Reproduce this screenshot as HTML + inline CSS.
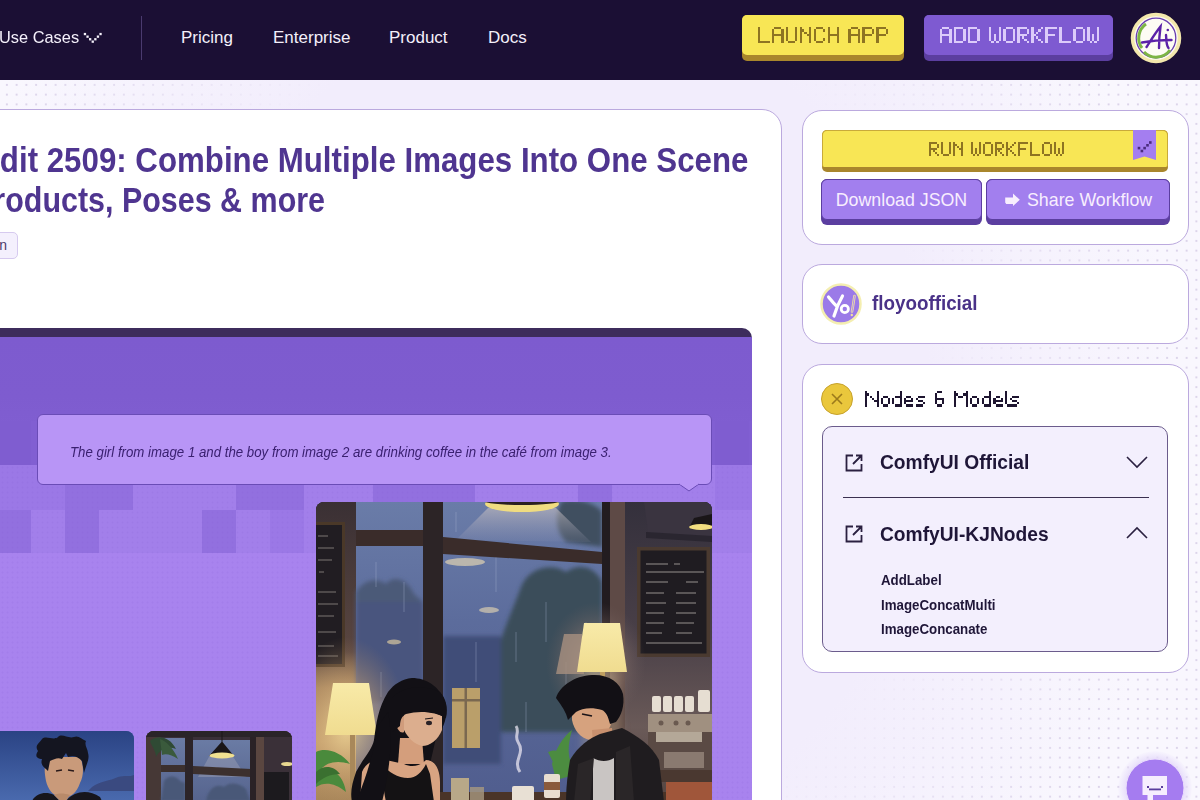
<!DOCTYPE html>
<html><head><meta charset="utf-8">
<style>
*{margin:0;padding:0;box-sizing:border-box}
html,body{width:1200px;height:800px;overflow:hidden}
body{position:relative;font-family:"Liberation Sans",sans-serif;background:#f9f7fe}
.abs{position:absolute}
#bgdots{position:absolute;left:0;top:80px;width:1200px;height:720px;background-color:#f9f7fe;
 background-image:radial-gradient(circle,#dcd4ea 0.9px,transparent 1.4px);background-size:9.75px 9.75px;background-position:2px 0px}
#bgfade{position:absolute;left:0;top:80px;width:1200px;height:720px;background:radial-gradient(ellipse 620px 700px at 560px 340px,#f2edfc 0%,#f2edfc 60%,rgba(242,237,252,0) 100%)}
nav{position:absolute;left:0;top:0;width:1200px;height:80px;background:#1b0f34}
.nv{position:absolute;color:#f4f0fa;font-size:17px;top:28px}
.pix{font-family:"Liberation Mono",monospace}
.card{position:absolute;background:#fff;border:1px solid #bba9de;border-radius:20px}
</style></head><body>
<div id="bgdots"></div>
<div id="bgfade"></div>
<nav>
 <div class="nv" style="left:-1px;transform:scaleX(0.963);transform-origin:0 0">Use Cases</div>
 <svg class="abs" style="left:0;top:0;overflow:visible" width="1" height="1"><g fill="#f4f0fa"><rect x="83.8" y="32.9" width="2.3" height="2.3"/><rect x="86.4" y="35.5" width="2.3" height="2.3"/><rect x="89.0" y="38.1" width="2.3" height="2.3"/><rect x="91.6" y="40.5" width="2.3" height="2.3"/><rect x="94.2" y="38.1" width="2.3" height="2.3"/><rect x="96.8" y="35.5" width="2.3" height="2.3"/><rect x="99.4" y="32.9" width="2.3" height="2.3"/></g></svg>
 <div class="abs" style="left:141px;top:16px;width:1px;height:44px;background:#4a3a6e"></div>
 <div class="nv" style="left:181px">Pricing</div>
 <div class="nv" style="left:273px">Enterprise</div>
 <div class="nv" style="left:389px">Product</div>
 <div class="nv" style="left:488px">Docs</div>
 <div class="abs" style="left:742px;top:15px;width:162px;height:46px;background:#a9862c;border-radius:5px"></div>
 <div class="abs pix" style="left:742px;top:15px;width:162px;height:40px;background:#f8e655;border-radius:5px;"></div>
 <svg class="abs" style="left:757.50px;top:26.80px" width="135" height="18" viewBox="0 0 135 18"><g fill="#8e7422" shape-rendering="crispEdges"><rect x="0.00" y="0.00" width="2.32" height="2.28"/><rect x="0.00" y="2.28" width="2.32" height="2.28"/><rect x="0.00" y="4.56" width="2.32" height="2.28"/><rect x="0.00" y="6.84" width="2.32" height="2.28"/><rect x="0.00" y="9.12" width="2.32" height="2.28"/><rect x="0.00" y="11.40" width="2.32" height="2.28"/><rect x="0.00" y="13.68" width="11.60" height="2.28"/><rect x="16.24" y="0.00" width="6.96" height="2.28"/><rect x="13.92" y="2.28" width="2.32" height="2.28"/><rect x="23.20" y="2.28" width="2.32" height="2.28"/><rect x="13.92" y="4.56" width="2.32" height="2.28"/><rect x="23.20" y="4.56" width="2.32" height="2.28"/><rect x="13.92" y="6.84" width="11.60" height="2.28"/><rect x="13.92" y="9.12" width="2.32" height="2.28"/><rect x="23.20" y="9.12" width="2.32" height="2.28"/><rect x="13.92" y="11.40" width="2.32" height="2.28"/><rect x="23.20" y="11.40" width="2.32" height="2.28"/><rect x="13.92" y="13.68" width="2.32" height="2.28"/><rect x="23.20" y="13.68" width="2.32" height="2.28"/><rect x="27.84" y="0.00" width="2.32" height="2.28"/><rect x="37.12" y="0.00" width="2.32" height="2.28"/><rect x="27.84" y="2.28" width="2.32" height="2.28"/><rect x="37.12" y="2.28" width="2.32" height="2.28"/><rect x="27.84" y="4.56" width="2.32" height="2.28"/><rect x="37.12" y="4.56" width="2.32" height="2.28"/><rect x="27.84" y="6.84" width="2.32" height="2.28"/><rect x="37.12" y="6.84" width="2.32" height="2.28"/><rect x="27.84" y="9.12" width="2.32" height="2.28"/><rect x="37.12" y="9.12" width="2.32" height="2.28"/><rect x="27.84" y="11.40" width="2.32" height="2.28"/><rect x="37.12" y="11.40" width="2.32" height="2.28"/><rect x="30.16" y="13.68" width="6.96" height="2.28"/><rect x="41.76" y="0.00" width="2.32" height="2.28"/><rect x="51.04" y="0.00" width="2.32" height="2.28"/><rect x="41.76" y="2.28" width="4.64" height="2.28"/><rect x="51.04" y="2.28" width="2.32" height="2.28"/><rect x="41.76" y="4.56" width="2.32" height="2.28"/><rect x="46.40" y="4.56" width="2.32" height="2.28"/><rect x="51.04" y="4.56" width="2.32" height="2.28"/><rect x="41.76" y="6.84" width="2.32" height="2.28"/><rect x="48.72" y="6.84" width="4.64" height="2.28"/><rect x="41.76" y="9.12" width="2.32" height="2.28"/><rect x="51.04" y="9.12" width="2.32" height="2.28"/><rect x="41.76" y="11.40" width="2.32" height="2.28"/><rect x="51.04" y="11.40" width="2.32" height="2.28"/><rect x="41.76" y="13.68" width="2.32" height="2.28"/><rect x="51.04" y="13.68" width="2.32" height="2.28"/><rect x="58.00" y="0.00" width="6.96" height="2.28"/><rect x="55.68" y="2.28" width="2.32" height="2.28"/><rect x="64.96" y="2.28" width="2.32" height="2.28"/><rect x="55.68" y="4.56" width="2.32" height="2.28"/><rect x="55.68" y="6.84" width="2.32" height="2.28"/><rect x="55.68" y="9.12" width="2.32" height="2.28"/><rect x="55.68" y="11.40" width="2.32" height="2.28"/><rect x="64.96" y="11.40" width="2.32" height="2.28"/><rect x="58.00" y="13.68" width="6.96" height="2.28"/><rect x="69.60" y="0.00" width="2.32" height="2.28"/><rect x="78.88" y="0.00" width="2.32" height="2.28"/><rect x="69.60" y="2.28" width="2.32" height="2.28"/><rect x="78.88" y="2.28" width="2.32" height="2.28"/><rect x="69.60" y="4.56" width="2.32" height="2.28"/><rect x="78.88" y="4.56" width="2.32" height="2.28"/><rect x="69.60" y="6.84" width="11.60" height="2.28"/><rect x="69.60" y="9.12" width="2.32" height="2.28"/><rect x="78.88" y="9.12" width="2.32" height="2.28"/><rect x="69.60" y="11.40" width="2.32" height="2.28"/><rect x="78.88" y="11.40" width="2.32" height="2.28"/><rect x="69.60" y="13.68" width="2.32" height="2.28"/><rect x="78.88" y="13.68" width="2.32" height="2.28"/><rect x="92.80" y="0.00" width="6.96" height="2.28"/><rect x="90.48" y="2.28" width="2.32" height="2.28"/><rect x="99.76" y="2.28" width="2.32" height="2.28"/><rect x="90.48" y="4.56" width="2.32" height="2.28"/><rect x="99.76" y="4.56" width="2.32" height="2.28"/><rect x="90.48" y="6.84" width="11.60" height="2.28"/><rect x="90.48" y="9.12" width="2.32" height="2.28"/><rect x="99.76" y="9.12" width="2.32" height="2.28"/><rect x="90.48" y="11.40" width="2.32" height="2.28"/><rect x="99.76" y="11.40" width="2.32" height="2.28"/><rect x="90.48" y="13.68" width="2.32" height="2.28"/><rect x="99.76" y="13.68" width="2.32" height="2.28"/><rect x="104.40" y="0.00" width="9.28" height="2.28"/><rect x="104.40" y="2.28" width="2.32" height="2.28"/><rect x="113.68" y="2.28" width="2.32" height="2.28"/><rect x="104.40" y="4.56" width="2.32" height="2.28"/><rect x="113.68" y="4.56" width="2.32" height="2.28"/><rect x="104.40" y="6.84" width="9.28" height="2.28"/><rect x="104.40" y="9.12" width="2.32" height="2.28"/><rect x="104.40" y="11.40" width="2.32" height="2.28"/><rect x="104.40" y="13.68" width="2.32" height="2.28"/><rect x="118.32" y="0.00" width="9.28" height="2.28"/><rect x="118.32" y="2.28" width="2.32" height="2.28"/><rect x="127.60" y="2.28" width="2.32" height="2.28"/><rect x="118.32" y="4.56" width="2.32" height="2.28"/><rect x="127.60" y="4.56" width="2.32" height="2.28"/><rect x="118.32" y="6.84" width="9.28" height="2.28"/><rect x="118.32" y="9.12" width="2.32" height="2.28"/><rect x="118.32" y="11.40" width="2.32" height="2.28"/><rect x="118.32" y="13.68" width="2.32" height="2.28"/></g></svg>
 <div class="abs" style="left:924px;top:15px;width:189px;height:46px;background:#5b3e9f;border-radius:5px"></div>
 <div class="abs pix" style="left:924px;top:15px;width:189px;height:40px;background:#7e5ad1;border-radius:5px;"></div>
 <svg class="abs" style="left:939.50px;top:27.20px" width="164" height="19" viewBox="0 0 164 19"><g fill="#dccbfa" shape-rendering="crispEdges"><rect x="2.34" y="0.00" width="7.02" height="2.33"/><rect x="0.00" y="2.33" width="2.34" height="2.33"/><rect x="9.36" y="2.33" width="2.34" height="2.33"/><rect x="0.00" y="4.66" width="2.34" height="2.33"/><rect x="9.36" y="4.66" width="2.34" height="2.33"/><rect x="0.00" y="6.99" width="11.70" height="2.33"/><rect x="0.00" y="9.32" width="2.34" height="2.33"/><rect x="9.36" y="9.32" width="2.34" height="2.33"/><rect x="0.00" y="11.65" width="2.34" height="2.33"/><rect x="9.36" y="11.65" width="2.34" height="2.33"/><rect x="0.00" y="13.98" width="2.34" height="2.33"/><rect x="9.36" y="13.98" width="2.34" height="2.33"/><rect x="14.04" y="0.00" width="9.36" height="2.33"/><rect x="14.04" y="2.33" width="2.34" height="2.33"/><rect x="23.40" y="2.33" width="2.34" height="2.33"/><rect x="14.04" y="4.66" width="2.34" height="2.33"/><rect x="23.40" y="4.66" width="2.34" height="2.33"/><rect x="14.04" y="6.99" width="2.34" height="2.33"/><rect x="23.40" y="6.99" width="2.34" height="2.33"/><rect x="14.04" y="9.32" width="2.34" height="2.33"/><rect x="23.40" y="9.32" width="2.34" height="2.33"/><rect x="14.04" y="11.65" width="2.34" height="2.33"/><rect x="23.40" y="11.65" width="2.34" height="2.33"/><rect x="14.04" y="13.98" width="9.36" height="2.33"/><rect x="28.08" y="0.00" width="9.36" height="2.33"/><rect x="28.08" y="2.33" width="2.34" height="2.33"/><rect x="37.44" y="2.33" width="2.34" height="2.33"/><rect x="28.08" y="4.66" width="2.34" height="2.33"/><rect x="37.44" y="4.66" width="2.34" height="2.33"/><rect x="28.08" y="6.99" width="2.34" height="2.33"/><rect x="37.44" y="6.99" width="2.34" height="2.33"/><rect x="28.08" y="9.32" width="2.34" height="2.33"/><rect x="37.44" y="9.32" width="2.34" height="2.33"/><rect x="28.08" y="11.65" width="2.34" height="2.33"/><rect x="37.44" y="11.65" width="2.34" height="2.33"/><rect x="28.08" y="13.98" width="9.36" height="2.33"/><rect x="49.14" y="0.00" width="2.34" height="2.33"/><rect x="58.50" y="0.00" width="2.34" height="2.33"/><rect x="49.14" y="2.33" width="2.34" height="2.33"/><rect x="58.50" y="2.33" width="2.34" height="2.33"/><rect x="49.14" y="4.66" width="2.34" height="2.33"/><rect x="58.50" y="4.66" width="2.34" height="2.33"/><rect x="49.14" y="6.99" width="2.34" height="2.33"/><rect x="53.82" y="6.99" width="2.34" height="2.33"/><rect x="58.50" y="6.99" width="2.34" height="2.33"/><rect x="49.14" y="9.32" width="2.34" height="2.33"/><rect x="53.82" y="9.32" width="2.34" height="2.33"/><rect x="58.50" y="9.32" width="2.34" height="2.33"/><rect x="49.14" y="11.65" width="2.34" height="2.33"/><rect x="53.82" y="11.65" width="2.34" height="2.33"/><rect x="58.50" y="11.65" width="2.34" height="2.33"/><rect x="51.48" y="13.98" width="2.34" height="2.33"/><rect x="56.16" y="13.98" width="2.34" height="2.33"/><rect x="65.52" y="0.00" width="7.02" height="2.33"/><rect x="63.18" y="2.33" width="2.34" height="2.33"/><rect x="72.54" y="2.33" width="2.34" height="2.33"/><rect x="63.18" y="4.66" width="2.34" height="2.33"/><rect x="72.54" y="4.66" width="2.34" height="2.33"/><rect x="63.18" y="6.99" width="2.34" height="2.33"/><rect x="72.54" y="6.99" width="2.34" height="2.33"/><rect x="63.18" y="9.32" width="2.34" height="2.33"/><rect x="72.54" y="9.32" width="2.34" height="2.33"/><rect x="63.18" y="11.65" width="2.34" height="2.33"/><rect x="72.54" y="11.65" width="2.34" height="2.33"/><rect x="65.52" y="13.98" width="7.02" height="2.33"/><rect x="77.22" y="0.00" width="9.36" height="2.33"/><rect x="77.22" y="2.33" width="2.34" height="2.33"/><rect x="86.58" y="2.33" width="2.34" height="2.33"/><rect x="77.22" y="4.66" width="2.34" height="2.33"/><rect x="86.58" y="4.66" width="2.34" height="2.33"/><rect x="77.22" y="6.99" width="9.36" height="2.33"/><rect x="77.22" y="9.32" width="2.34" height="2.33"/><rect x="81.90" y="9.32" width="2.34" height="2.33"/><rect x="77.22" y="11.65" width="2.34" height="2.33"/><rect x="84.24" y="11.65" width="2.34" height="2.33"/><rect x="77.22" y="13.98" width="2.34" height="2.33"/><rect x="86.58" y="13.98" width="2.34" height="2.33"/><rect x="91.26" y="0.00" width="2.34" height="2.33"/><rect x="100.62" y="0.00" width="2.34" height="2.33"/><rect x="91.26" y="2.33" width="2.34" height="2.33"/><rect x="98.28" y="2.33" width="2.34" height="2.33"/><rect x="91.26" y="4.66" width="2.34" height="2.33"/><rect x="95.94" y="4.66" width="2.34" height="2.33"/><rect x="91.26" y="6.99" width="4.68" height="2.33"/><rect x="91.26" y="9.32" width="2.34" height="2.33"/><rect x="95.94" y="9.32" width="2.34" height="2.33"/><rect x="91.26" y="11.65" width="2.34" height="2.33"/><rect x="98.28" y="11.65" width="2.34" height="2.33"/><rect x="91.26" y="13.98" width="2.34" height="2.33"/><rect x="100.62" y="13.98" width="2.34" height="2.33"/><rect x="105.30" y="0.00" width="11.70" height="2.33"/><rect x="105.30" y="2.33" width="2.34" height="2.33"/><rect x="105.30" y="4.66" width="2.34" height="2.33"/><rect x="105.30" y="6.99" width="9.36" height="2.33"/><rect x="105.30" y="9.32" width="2.34" height="2.33"/><rect x="105.30" y="11.65" width="2.34" height="2.33"/><rect x="105.30" y="13.98" width="2.34" height="2.33"/><rect x="119.34" y="0.00" width="2.34" height="2.33"/><rect x="119.34" y="2.33" width="2.34" height="2.33"/><rect x="119.34" y="4.66" width="2.34" height="2.33"/><rect x="119.34" y="6.99" width="2.34" height="2.33"/><rect x="119.34" y="9.32" width="2.34" height="2.33"/><rect x="119.34" y="11.65" width="2.34" height="2.33"/><rect x="119.34" y="13.98" width="11.70" height="2.33"/><rect x="135.72" y="0.00" width="7.02" height="2.33"/><rect x="133.38" y="2.33" width="2.34" height="2.33"/><rect x="142.74" y="2.33" width="2.34" height="2.33"/><rect x="133.38" y="4.66" width="2.34" height="2.33"/><rect x="142.74" y="4.66" width="2.34" height="2.33"/><rect x="133.38" y="6.99" width="2.34" height="2.33"/><rect x="142.74" y="6.99" width="2.34" height="2.33"/><rect x="133.38" y="9.32" width="2.34" height="2.33"/><rect x="142.74" y="9.32" width="2.34" height="2.33"/><rect x="133.38" y="11.65" width="2.34" height="2.33"/><rect x="142.74" y="11.65" width="2.34" height="2.33"/><rect x="135.72" y="13.98" width="7.02" height="2.33"/><rect x="147.42" y="0.00" width="2.34" height="2.33"/><rect x="156.78" y="0.00" width="2.34" height="2.33"/><rect x="147.42" y="2.33" width="2.34" height="2.33"/><rect x="156.78" y="2.33" width="2.34" height="2.33"/><rect x="147.42" y="4.66" width="2.34" height="2.33"/><rect x="156.78" y="4.66" width="2.34" height="2.33"/><rect x="147.42" y="6.99" width="2.34" height="2.33"/><rect x="152.10" y="6.99" width="2.34" height="2.33"/><rect x="156.78" y="6.99" width="2.34" height="2.33"/><rect x="147.42" y="9.32" width="2.34" height="2.33"/><rect x="152.10" y="9.32" width="2.34" height="2.33"/><rect x="156.78" y="9.32" width="2.34" height="2.33"/><rect x="147.42" y="11.65" width="2.34" height="2.33"/><rect x="152.10" y="11.65" width="2.34" height="2.33"/><rect x="156.78" y="11.65" width="2.34" height="2.33"/><rect x="149.76" y="13.98" width="2.34" height="2.33"/><rect x="154.44" y="13.98" width="2.34" height="2.33"/></g></svg>
 <svg class="abs" style="left:1130px;top:12px" width="52" height="52" viewBox="0 0 52 52">
  <circle cx="26" cy="26" r="23.5" fill="#fdfcf4" stroke="#f3e8ac" stroke-width="3.5"/>
  <circle cx="26" cy="26" r="19.8" fill="none" stroke="#6a3fb0" stroke-width="1.3"/>
  <path d="M12 36 A17 17 0 0 1 16 12 M40 38 A17 17 0 0 1 14 40" fill="none" stroke="#7cb544" stroke-width="3"/>
  <path d="M16.5 35 C 21 28, 26 20, 30.5 14.5 C 29.5 22, 29 29, 29 36 M12 30.5 C 20 29, 32 28, 41.5 28 M36 23 C 36.5 28, 36 33, 38.5 36" fill="none" stroke="#5b22a8" stroke-width="2.4" stroke-linecap="round"/>
  <circle cx="37.8" cy="18" r="1.3" fill="#5b22a8"/>
 </svg>
</nav>

<div class="card" style="left:-40px;top:109px;width:822px;height:760px"></div>

<div class="abs" style="left:-120px;top:140px;white-space:nowrap;color:#4f3590;font-size:35px;font-weight:bold;line-height:40px;transform:scaleX(0.893);transform-origin:0 0" id="t1">Image Edit 2509: Combine Multiple Images Into One Scene</div>
<div class="abs" style="left:-76px;top:180px;white-space:nowrap;color:#4f3590;font-size:35px;font-weight:bold;line-height:40px;transform:scaleX(0.87);transform-origin:0 0" id="t2">for Products, Poses &amp; more</div>
<div class="abs" style="left:-40px;top:232px;width:58px;height:27px;background:#f4f0fd;border:1px solid #d6caef;border-radius:5px;color:#4a3a6a;font-size:14px;line-height:25px;text-align:right;padding-right:10px">Design</div>

<div class="abs" id="hero" style="left:-40px;top:328px;width:792px;height:500px;border-radius:10px;overflow:hidden;background:#3d2c5c">
 <div class="abs" style="left:0;top:9px;width:792px;height:491px;background:linear-gradient(180deg,#7d5bcf 0px,#7e5ccf 60px,#805ed1 93px,#805ed1 137px,#a883ee 225px)"></div>
<div class="abs" style="left:36.5px;top:137px;width:34.5px;height:45px;background:#9b78e6"></div>
<div class="abs" style="left:70.7px;top:137px;width:34.5px;height:45px;background:#9b78e6"></div>
<div class="abs" style="left:104.9px;top:137px;width:34.5px;height:45px;background:#9270df"></div>
<div class="abs" style="left:139.1px;top:137px;width:34.5px;height:45px;background:#9270df"></div>
<div class="abs" style="left:173.3px;top:137px;width:34.5px;height:45px;background:#a27fea"></div>
<div class="abs" style="left:207.5px;top:137px;width:34.5px;height:45px;background:#a27fea"></div>
<div class="abs" style="left:241.7px;top:137px;width:34.5px;height:45px;background:#a27fea"></div>
<div class="abs" style="left:275.9px;top:137px;width:34.5px;height:45px;background:#9270df"></div>
<div class="abs" style="left:310.1px;top:137px;width:34.5px;height:45px;background:#9270df"></div>
<div class="abs" style="left:344.3px;top:137px;width:34.5px;height:45px;background:#a27fea"></div>
<div class="abs" style="left:378.5px;top:137px;width:34.5px;height:45px;background:#a27fea"></div>
<div class="abs" style="left:412.7px;top:137px;width:34.5px;height:45px;background:#9270df"></div>
<div class="abs" style="left:446.9px;top:137px;width:34.5px;height:45px;background:#9270df"></div>
<div class="abs" style="left:481.1px;top:137px;width:34.5px;height:45px;background:#9270df"></div>
<div class="abs" style="left:515.3px;top:137px;width:34.5px;height:45px;background:#a27fea"></div>
<div class="abs" style="left:549.5px;top:137px;width:34.5px;height:45px;background:#a27fea"></div>
<div class="abs" style="left:583.7px;top:137px;width:34.5px;height:45px;background:#a27fea"></div>
<div class="abs" style="left:617.9px;top:137px;width:34.5px;height:45px;background:#9270df"></div>
<div class="abs" style="left:652.1px;top:137px;width:34.5px;height:45px;background:#a27fea"></div>
<div class="abs" style="left:686.3px;top:137px;width:34.5px;height:45px;background:#a27fea"></div>
<div class="abs" style="left:720.5px;top:137px;width:34.5px;height:45px;background:#a27fea"></div>
<div class="abs" style="left:754.7px;top:137px;width:34.5px;height:45px;background:#9b78e6"></div>
<div class="abs" style="left:788.9px;top:137px;width:34.5px;height:45px;background:#9b78e6"></div>
<div class="abs" style="left:36.5px;top:182px;width:34.5px;height:43px;background:#9270df"></div>
<div class="abs" style="left:70.7px;top:182px;width:34.5px;height:43px;background:#a27fea"></div>
<div class="abs" style="left:104.9px;top:182px;width:34.5px;height:43px;background:#9270df"></div>
<div class="abs" style="left:139.1px;top:182px;width:34.5px;height:43px;background:#a27fea"></div>
<div class="abs" style="left:173.3px;top:182px;width:34.5px;height:43px;background:#a27fea"></div>
<div class="abs" style="left:207.5px;top:182px;width:34.5px;height:43px;background:#a27fea"></div>
<div class="abs" style="left:241.7px;top:182px;width:34.5px;height:43px;background:#9270df"></div>
<div class="abs" style="left:275.9px;top:182px;width:34.5px;height:43px;background:#a27fea"></div>
<div class="abs" style="left:310.1px;top:182px;width:34.5px;height:43px;background:#9b78e6"></div>
<div class="abs" style="left:344.3px;top:182px;width:34.5px;height:43px;background:#a27fea"></div>
<div class="abs" style="left:378.5px;top:182px;width:34.5px;height:43px;background:#a27fea"></div>
<div class="abs" style="left:412.7px;top:182px;width:34.5px;height:43px;background:#a27fea"></div>
<div class="abs" style="left:446.9px;top:182px;width:34.5px;height:43px;background:#a27fea"></div>
<div class="abs" style="left:481.1px;top:182px;width:34.5px;height:43px;background:#a27fea"></div>
<div class="abs" style="left:515.3px;top:182px;width:34.5px;height:43px;background:#a27fea"></div>
<div class="abs" style="left:549.5px;top:182px;width:34.5px;height:43px;background:#a27fea"></div>
<div class="abs" style="left:583.7px;top:182px;width:34.5px;height:43px;background:#a27fea"></div>
<div class="abs" style="left:617.9px;top:182px;width:34.5px;height:43px;background:#a27fea"></div>
<div class="abs" style="left:652.1px;top:182px;width:34.5px;height:43px;background:#a27fea"></div>
<div class="abs" style="left:686.3px;top:182px;width:34.5px;height:43px;background:#a27fea"></div>
<div class="abs" style="left:720.5px;top:182px;width:34.5px;height:43px;background:#a27fea"></div>
<div class="abs" style="left:754.7px;top:182px;width:34.5px;height:43px;background:#a27fea"></div>
<div class="abs" style="left:788.9px;top:182px;width:34.5px;height:43px;background:#a27fea"></div>
<div class="abs" style="left:36.5px;top:93px;width:34.5px;height:44px;background:#7f5dd0"></div>
<div class="abs" style="left:70.7px;top:93px;width:34.5px;height:44px;background:#815fd2"></div>
<div class="abs" style="left:104.9px;top:93px;width:34.5px;height:44px;background:#815fd2"></div>
<div class="abs" style="left:139.1px;top:93px;width:34.5px;height:44px;background:#7f5dd0"></div>
<div class="abs" style="left:173.3px;top:93px;width:34.5px;height:44px;background:#815fd2"></div>
<div class="abs" style="left:207.5px;top:93px;width:34.5px;height:44px;background:#815fd2"></div>
<div class="abs" style="left:241.7px;top:93px;width:34.5px;height:44px;background:#7f5dd0"></div>
<div class="abs" style="left:275.9px;top:93px;width:34.5px;height:44px;background:#815fd2"></div>
<div class="abs" style="left:310.1px;top:93px;width:34.5px;height:44px;background:#815fd2"></div>
<div class="abs" style="left:344.3px;top:93px;width:34.5px;height:44px;background:#7f5dd0"></div>
<div class="abs" style="left:378.5px;top:93px;width:34.5px;height:44px;background:#815fd2"></div>
<div class="abs" style="left:412.7px;top:93px;width:34.5px;height:44px;background:#815fd2"></div>
<div class="abs" style="left:446.9px;top:93px;width:34.5px;height:44px;background:#7f5dd0"></div>
<div class="abs" style="left:481.1px;top:93px;width:34.5px;height:44px;background:#815fd2"></div>
<div class="abs" style="left:515.3px;top:93px;width:34.5px;height:44px;background:#815fd2"></div>
<div class="abs" style="left:549.5px;top:93px;width:34.5px;height:44px;background:#7f5dd0"></div>
<div class="abs" style="left:583.7px;top:93px;width:34.5px;height:44px;background:#815fd2"></div>
<div class="abs" style="left:617.9px;top:93px;width:34.5px;height:44px;background:#815fd2"></div>
<div class="abs" style="left:652.1px;top:93px;width:34.5px;height:44px;background:#7f5dd0"></div>
<div class="abs" style="left:686.3px;top:93px;width:34.5px;height:44px;background:#815fd2"></div>
<div class="abs" style="left:720.5px;top:93px;width:34.5px;height:44px;background:#815fd2"></div>
<div class="abs" style="left:754.7px;top:93px;width:34.5px;height:44px;background:#7f5dd0"></div>
<div class="abs" style="left:788.9px;top:93px;width:34.5px;height:44px;background:#815fd2"></div>
<div class="abs" style="left:0;top:225px;width:792px;height:275px;background:#a883ee"></div>
<div class="abs" style="left:0;top:137px;width:792px;height:363px;background-image:radial-gradient(circle,rgba(120,80,200,0.10) 0.8px,transparent 1.2px);background-size:5px 5px"></div>
</div>
<div class="abs" style="left:37px;top:414px;width:675px;height:71px;background:#b895f6;border:1px solid #6a4cb6;border-radius:6px"></div>
<svg class="abs" style="left:679px;top:483px" width="20" height="9" viewBox="0 0 20 9"><path d="M0 1L10 8L20 1" fill="#b895f6" stroke="#6a4cb6" stroke-width="1"/><rect x="1" y="0" width="18" height="1.5" fill="#b895f6"/></svg>
<div class="abs" style="left:70px;top:444px;color:#3a2070;font-size:14px;font-style:italic;white-space:nowrap;transform:scaleX(0.947);transform-origin:0 0">The girl from image 1 and the boy from image 2 are drinking coffee in the café from image 3.</div>
<div class="abs" id="img3" style="left:316px;top:502px;width:396px;height:320px;border-radius:8px;background:#2c2532;overflow:hidden"><svg width="396" height="300" viewBox="0 0 396 300">
<defs>
<linearGradient id="lw" x1="0" y1="0" x2="0" y2="1"><stop offset="0" stop-color="#3a3034"/><stop offset="0.5" stop-color="#5a4640"/><stop offset="0.62" stop-color="#a88860"/><stop offset="0.8" stop-color="#c8a470"/><stop offset="1" stop-color="#a88658"/></linearGradient>
<linearGradient id="pane" x1="0" y1="0" x2="0" y2="1"><stop offset="0" stop-color="#6a7ca8"/><stop offset="0.4" stop-color="#5c6c9c"/><stop offset="1" stop-color="#505d8e"/></linearGradient>
<linearGradient id="rw" x1="0" y1="0" x2="0" y2="1"><stop offset="0" stop-color="#34303c"/><stop offset="0.45" stop-color="#4a4048"/><stop offset="0.75" stop-color="#6a5a58"/><stop offset="1" stop-color="#544440"/></linearGradient>
<radialGradient id="glowL" cx="0.5" cy="0.5" r="0.5"><stop offset="0" stop-color="#f0d898" stop-opacity="0.85"/><stop offset="0.55" stop-color="#c8a070" stop-opacity="0.45"/><stop offset="1" stop-color="#a08060" stop-opacity="0"/></radialGradient>
<radialGradient id="glowR" cx="0.5" cy="0.5" r="0.5"><stop offset="0" stop-color="#d8c0a0" stop-opacity="0.7"/><stop offset="0.6" stop-color="#907870" stop-opacity="0.35"/><stop offset="1" stop-color="#706060" stop-opacity="0"/></radialGradient>
<linearGradient id="cone" x1="0" y1="0" x2="0" y2="1"><stop offset="0" stop-color="#c8c0c0" stop-opacity="0.6"/><stop offset="1" stop-color="#a0a0b8" stop-opacity="0.1"/></linearGradient>
<linearGradient id="shade" x1="0" y1="0" x2="0" y2="1"><stop offset="0" stop-color="#f8eaa8"/><stop offset="1" stop-color="#f0dc90"/></linearGradient>
<filter id="bl" x="-20%" y="-20%" width="140%" height="140%"><feGaussianBlur stdDeviation="2"/></filter>
<filter id="bl4" x="-30%" y="-30%" width="160%" height="160%"><feGaussianBlur stdDeviation="5"/></filter>
</defs>
<rect width="396" height="300" fill="#2f2832"/>
<rect x="0" y="0" width="40" height="300" fill="url(#lw)"/>
<rect x="0" y="20" width="29" height="145" fill="#4a3828"/>
<rect x="0" y="23" width="26" height="139" fill="#211d22"/>
<g stroke="#b8b0a8" stroke-width="1" opacity="0.6"><path d="M2 34h10M2 46h16M2 58h14M3 70h5M2 90h18M2 102h20M2 114h16M2 130h18M2 144h16M2 154h20"/></g>
<rect x="40" y="0" width="67" height="300" fill="url(#pane)"/>
<rect x="127" y="0" width="159" height="300" fill="url(#pane)"/>
<g filter="url(#bl)">
<path d="M40 90 C48 78 60 75 70 82 C78 72 92 78 98 92 L107 100 L107 140 L40 140Z" fill="#4c5a78"/>
<rect x="40" y="100" width="67" height="100" fill="#48557e"/>
<path d="M205 85 C212 66 236 60 250 70 C264 60 280 66 286 80 L286 230 L176 230 C168 205 172 175 182 150 C186 130 196 110 205 85Z" fill="#3b4e5a"/>
<path d="M245 0 C255 -5 280 0 286 10 L286 45 L250 40 C240 30 238 15 245 0Z" fill="#3f5060"/>
<rect x="127" y="134" width="58" height="128" fill="#414d78"/>
</g>
<rect x="136" y="186" width="28" height="60" fill="#c8a868" opacity="0.9"/>
<rect x="136" y="197" width="28" height="2.5" fill="#7a6850"/>
<rect x="148.5" y="186" width="2.5" height="60" fill="#7a6850"/>
<ellipse cx="149" cy="60" rx="20" ry="4" fill="#d8ccb0" opacity="0.75"/>
<ellipse cx="173" cy="108" rx="10" ry="3" fill="#d8ccb0" opacity="0.7"/>
<ellipse cx="78" cy="140" rx="7" ry="2.5" fill="#d8c8a0" opacity="0.7"/>
<path d="M172 6 L240 6 L275 40 L140 38Z" fill="url(#cone)"/>
<g stroke="#a8b4d0" stroke-width="0.8" opacity="0.45"><path d="M60 60v25M88 80v30M140 10v20M180 50v40M200 130v30M230 100v40M250 160v35M270 120v30M65 170v25M160 140v40M210 200v30"/></g>
<rect x="40" y="28" width="67" height="16" fill="#3a2c2a"/>
<path d="M127 35 L286 50 L286 62 L127 52Z" fill="#3a2c2a"/>
<rect x="107" y="0" width="20" height="300" fill="#2c2426"/>
<rect x="286" y="0" width="8" height="300" fill="#221c20"/>
<rect x="294" y="0" width="15" height="300" fill="#5e4a46"/>
<rect x="309" y="0" width="87" height="300" fill="url(#rw)"/>
<path d="M328 0 L396 0 L396 34 L332 30Z" fill="#3a3440"/>
<path d="M330 30 L396 34 L396 40 L330 36Z" fill="#2a2630"/>
<rect x="321" y="45" width="73" height="110" fill="#4a3a30"/>
<rect x="324.5" y="48.5" width="66" height="103" fill="#1f1c21"/>
<g stroke="#c8c2bc" stroke-width="1.1" opacity="0.7"><path d="M330 62h22M358 62h6M330 70h58M330 80h22M370 80h12M330 91h18M360 91h20M330 101h20M360 101h20M330 111h18M360 111h20M330 121h18M360 121h18M330 131h16M360 131h16M330 141h56"/></g>
<path d="M378 16 L396 12 L396 26 L373 26Z" fill="#1a1618"/>
<ellipse cx="385" cy="25" rx="12" ry="3" fill="#f2de80"/>
<ellipse cx="206" cy="2" rx="37" ry="8" fill="#f0dc80"/>
<ellipse cx="206" cy="-1" rx="38" ry="4" fill="#2a2020"/>
<ellipse cx="30" cy="225" rx="62" ry="90" fill="url(#glowL)"/>
<ellipse cx="280" cy="160" rx="50" ry="60" fill="url(#glowR)"/>
<path d="M248 132 L266 132 L268 172 L240 172Z" fill="#a89080" opacity="0.8"/>
<path d="M270 170 L302 170 L306 250 L266 250Z" fill="#c8b08a" opacity="0.35" filter="url(#bl4)"/><rect x="284" y="169" width="5" height="60" fill="#c0a060"/>
<path d="M268 121 L304 121 L311 170 L261 170Z" fill="url(#shade)"/>
<rect x="34" y="232" width="5" height="68" fill="#a8885a"/>
<path d="M17 181 L53 181 L61 233 L9 233Z" fill="url(#shade)"/>
<path d="M0 250 C10 245 25 250 34 262 C22 258 12 260 6 266 C18 266 28 275 30 290 C18 280 8 280 0 285Z" fill="#4a8a3c"/>
<path d="M0 270 C8 262 18 264 24 272 C14 272 6 276 0 282Z" fill="#3a7030"/>
<path d="M236 262 C240 246 246 236 256 228 C252 242 252 250 254 258 C260 248 268 244 276 244 C266 254 262 266 262 272 L240 278Z M232 250 C240 246 246 250 250 256 L238 262Z" fill="#4c8c40"/>
<rect x="332" y="212" width="64" height="18" fill="#a09080"/>
<g fill="#6a5a50"><circle cx="345" cy="221" r="2.5"/><circle cx="360" cy="221" r="2.5"/><circle cx="372" cy="221" r="2.5"/></g>
<rect x="332" y="230" width="64" height="38" fill="#5a4a44"/>
<rect x="340" y="230" width="46" height="10" fill="#b4a898"/>
<rect x="348" y="250" width="40" height="16" fill="#8a7a70"/>
<g fill="#e6ded2"><rect x="336" y="194" width="9" height="16" rx="2"/><rect x="347" y="194" width="9" height="16" rx="2"/><rect x="358" y="194" width="9" height="16" rx="2"/><rect x="369" y="194" width="9" height="16" rx="2"/><rect x="382" y="188" width="12" height="22" rx="2"/></g>
<rect x="332" y="268" width="64" height="12" fill="#4a3830"/>
<rect x="350" y="280" width="46" height="20" fill="#a0563a"/>
<rect x="120" y="290" width="230" height="10" fill="#4a3428"/>
<rect x="196" y="284" width="22" height="16" rx="2" fill="#e8e0d4"/>
<rect x="228" y="272" width="16" height="24" rx="2" fill="#e8ddd0"/>
<rect x="228" y="280" width="16" height="8" fill="#8a5a3c"/>
<rect x="135" y="276" width="18" height="24" fill="#b8a888"/>
<rect x="154" y="285" width="14" height="15" fill="#a89880" opacity="0.8"/>
<path d="M204 270 C196 258 210 252 202 240 C198 234 204 230 200 224" stroke="#e8e4f0" stroke-width="3" fill="none" opacity="0.75"/>
<!-- girl -->
<path d="M96 176 C110 176 124 184 130 202 C132 214 128 226 120 236 L114 262 L60 300 L36 300 C34 290 36 282 40 270 C46 258 56 248 58 238 C60 222 62 206 72 190 C78 182 86 177 96 176Z" fill="#121015"/>
<path d="M84 236 L106 236 L108 262 L82 262Z" fill="#d49e7c"/>
<path d="M46 270 C50 260 60 256 70 258 L88 262 C96 266 104 264 110 258 C118 258 124 266 124 280 L124 300 L44 300Z" fill="#d8a482"/>
<path d="M66 262 C72 270 82 276 92 276 C100 276 106 270 110 262 L114 272 L118 300 L70 300 C68 290 66 276 66 262Z" fill="#141214"/>
<path d="M88 212 C96 208 116 208 126 214 L126 228 C122 238 114 244 106 244 C98 242 92 236 88 228Z" fill="#dcae8e"/>
<path d="M80 214 C82 210 86 210 88 214 L88 230 C85 232 81 228 80 222Z" fill="#d09c7c"/>
<path d="M76 196 C86 184 108 182 124 190 C130 196 132 206 130 216 C120 210 104 208 90 212 C86 214 84 218 84 224 L76 230Z" fill="#121015"/>
<path d="M72 210 C76 230 76 260 66 300 L40 300 C50 276 58 250 62 224Z" fill="#121015"/>
<ellipse cx="113" cy="221" rx="3" ry="2.2" fill="#2a2226"/>
<path d="M109 217 l8 -1" stroke="#1a1418" stroke-width="1.2"/>
<!-- boy -->
<path d="M256 202 C264 198 284 198 294 206 L296 218 C294 230 286 238 274 238 C264 236 258 228 256 218Z" fill="#d6a27e"/>
<path d="M240 196 C244 184 258 174 276 173 C292 172 304 180 307 192 C309 204 305 214 300 220 L294 222 C292 214 290 210 286 208 C276 205 266 206 260 210 L252 218 C250 210 246 204 240 196Z" fill="#121015"/>
<path d="M266 212 l10 2" stroke="#1a1418" stroke-width="1.6"/>
<path d="M276 228 L296 226 L298 256 L278 256Z" fill="#c8906e"/>
<path d="M254 258 C262 244 274 236 284 232 L306 226 C322 234 336 244 343 258 L348 300 L250 300 C250 284 252 270 254 258Z" fill="#1f1c1f"/>
<path d="M277 256 C284 260 292 260 298 256 L298 300 L277 300Z" fill="#c9c5c3"/>
<path d="M262 262 L278 256 L274 300 L258 300Z M300 250 L314 244 L318 300 L300 300Z" fill="#2a2628"/>
</svg></div>
<div class="abs" id="img1" style="left:-12px;top:731px;width:146px;height:100px;border-radius:8px;background:#3d5c9c;overflow:hidden"><svg width="146" height="70" viewBox="0 0 146 70">
<defs><linearGradient id="sky1" x1="0" y1="0" x2="0" y2="1"><stop offset="0" stop-color="#2a4384"/><stop offset="1" stop-color="#4a6aae"/></linearGradient></defs>
<rect width="146" height="70" fill="url(#sky1)"/>
<path d="M104 56 C112 50 122 50 130 46 C136 44 142 46 146 44 L146 60 C132 60 118 60 100 60Z" fill="#3a4a80"/>
<path d="M58 50 C56 40 56 32 60 26 L92 26 C96 34 96 44 92 52 C88 64 80 68 72 66 C64 64 60 58 58 50Z" fill="#c99a7a"/>
<path d="M50 20 C46 14 52 12 54 8 C58 4 66 10 70 6 C74 2 80 8 86 6 C90 4 94 8 98 10 C96 14 100 18 100 22 C102 28 98 34 96 42 L94 30 C90 26 86 24 80 26 L78 22 L74 28 C70 26 66 28 62 30 L60 40 C56 36 52 34 54 28 C50 28 46 26 50 20Z" fill="#141520"/>
<path d="M68 40 l6 -1 M80 39 l6 1" stroke="#2a1a1a" stroke-width="1.5"/>
<path d="M44 70 C48 62 58 60 66 64 L72 70Z M78 70 C86 60 100 58 112 66 L114 70Z" fill="#17161c"/>
<path d="M66 64 C70 62 76 62 82 64 L78 70 L72 70Z" fill="#b88a6a"/>
</svg></div>
<div class="abs" id="img2" style="left:146px;top:731px;width:146px;height:100px;border-radius:8px;background:#3a3038;overflow:hidden"><svg width="146" height="70" viewBox="0 0 146 70">
<defs><linearGradient id="p2" x1="0" y1="0" x2="0" y2="1"><stop offset="0" stop-color="#6a7ba4"/><stop offset="1" stop-color="#56648e"/></linearGradient>
<filter id="b2"><feGaussianBlur stdDeviation="1.2"/></filter></defs>
<rect width="146" height="70" fill="#3a3038"/>
<rect x="0" y="0" width="15" height="70" fill="#463836"/>
<rect x="15" y="7" width="24" height="63" fill="url(#p2)"/>
<rect x="47" y="9" width="58" height="61" fill="url(#p2)"/>
<path d="M64 24 L86 24 L100 46 L52 46Z" fill="#a8a8b8" opacity="0.4"/>
<g filter="url(#b2)" fill="#4a5878"><path d="M18 50 C22 44 30 44 34 50 L39 52 L39 70 L15 70Z"/><path d="M60 70 C62 58 70 52 78 56 C84 50 94 52 100 58 L104 70Z"/></g>
<ellipse cx="65" cy="38" rx="8" ry="2" fill="#d8d0b8" opacity="0.6"/>
<rect x="15" y="34" width="24" height="7" fill="#3c302e"/>
<path d="M47 35 L105 38 L105 46 L47 43Z" fill="#3c302e"/>
<rect x="39" y="0" width="8" height="70" fill="#2c2428"/>
<rect x="104" y="0" width="6" height="70" fill="#2a2226"/>
<rect x="110" y="0" width="8" height="70" fill="#5a4640"/>
<rect x="0" y="0" width="146" height="6" fill="#2a2428"/>
<path d="M75.5 0 L76.5 0 L76.5 11 L88 25 L63 25 L75.5 11Z" fill="#1a1618"/>
<ellipse cx="76" cy="24.5" rx="12.5" ry="3" fill="#f0e090"/>
<rect x="118" y="41" width="25" height="29" fill="#1c1a1e"/>
<ellipse cx="141" cy="33" rx="6" ry="2" fill="#e8d890"/>
<path d="M4 10 C12 3 24 6 30 18 C22 15 14 18 10 26 C10 20 6 16 4 10Z" fill="#2f4a34"/>
<path d="M14 8 C20 10 28 18 32 28 C26 24 20 22 16 24Z" fill="#3a5a3c"/>
</svg></div>

<div class="card" style="left:802px;top:110px;width:387px;height:135px"></div>
<div class="card" style="left:802px;top:264px;width:387px;height:80px"></div>
<div class="card" style="left:802px;top:364px;width:387px;height:309px"></div>


<div class="abs" style="left:822px;top:130px;width:346px;height:42px;background:#a9862c;border-radius:5px"></div>
<div class="abs pix" style="left:822px;top:130px;width:346px;height:37px;background:#f8e655;border:1px solid #c9aa3a;border-bottom:none;border-radius:5px 5px 2px 2px;"></div>
<svg class="abs" style="left:928.50px;top:141.90px" width="139" height="16" viewBox="0 0 139 16"><g fill="#8e7422" shape-rendering="crispEdges"><rect x="0.00" y="0.00" width="7.94" height="1.96"/><rect x="0.00" y="1.96" width="1.99" height="1.96"/><rect x="7.94" y="1.96" width="1.99" height="1.96"/><rect x="0.00" y="3.92" width="1.99" height="1.96"/><rect x="7.94" y="3.92" width="1.99" height="1.96"/><rect x="0.00" y="5.88" width="7.94" height="1.96"/><rect x="0.00" y="7.84" width="1.99" height="1.96"/><rect x="3.97" y="7.84" width="1.99" height="1.96"/><rect x="0.00" y="9.80" width="1.99" height="1.96"/><rect x="5.96" y="9.80" width="1.99" height="1.96"/><rect x="0.00" y="11.76" width="1.99" height="1.96"/><rect x="7.94" y="11.76" width="1.99" height="1.96"/><rect x="11.91" y="0.00" width="1.99" height="1.96"/><rect x="19.85" y="0.00" width="1.99" height="1.96"/><rect x="11.91" y="1.96" width="1.99" height="1.96"/><rect x="19.85" y="1.96" width="1.99" height="1.96"/><rect x="11.91" y="3.92" width="1.99" height="1.96"/><rect x="19.85" y="3.92" width="1.99" height="1.96"/><rect x="11.91" y="5.88" width="1.99" height="1.96"/><rect x="19.85" y="5.88" width="1.99" height="1.96"/><rect x="11.91" y="7.84" width="1.99" height="1.96"/><rect x="19.85" y="7.84" width="1.99" height="1.96"/><rect x="11.91" y="9.80" width="1.99" height="1.96"/><rect x="19.85" y="9.80" width="1.99" height="1.96"/><rect x="13.90" y="11.76" width="5.96" height="1.96"/><rect x="23.82" y="0.00" width="1.99" height="1.96"/><rect x="31.76" y="0.00" width="1.99" height="1.96"/><rect x="23.82" y="1.96" width="3.97" height="1.96"/><rect x="31.76" y="1.96" width="1.99" height="1.96"/><rect x="23.82" y="3.92" width="1.99" height="1.96"/><rect x="27.79" y="3.92" width="1.99" height="1.96"/><rect x="31.76" y="3.92" width="1.99" height="1.96"/><rect x="23.82" y="5.88" width="1.99" height="1.96"/><rect x="29.78" y="5.88" width="3.97" height="1.96"/><rect x="23.82" y="7.84" width="1.99" height="1.96"/><rect x="31.76" y="7.84" width="1.99" height="1.96"/><rect x="23.82" y="9.80" width="1.99" height="1.96"/><rect x="31.76" y="9.80" width="1.99" height="1.96"/><rect x="23.82" y="11.76" width="1.99" height="1.96"/><rect x="31.76" y="11.76" width="1.99" height="1.96"/><rect x="41.69" y="0.00" width="1.99" height="1.96"/><rect x="49.62" y="0.00" width="1.99" height="1.96"/><rect x="41.69" y="1.96" width="1.99" height="1.96"/><rect x="49.62" y="1.96" width="1.99" height="1.96"/><rect x="41.69" y="3.92" width="1.99" height="1.96"/><rect x="49.62" y="3.92" width="1.99" height="1.96"/><rect x="41.69" y="5.88" width="1.99" height="1.96"/><rect x="45.66" y="5.88" width="1.99" height="1.96"/><rect x="49.62" y="5.88" width="1.99" height="1.96"/><rect x="41.69" y="7.84" width="1.99" height="1.96"/><rect x="45.66" y="7.84" width="1.99" height="1.96"/><rect x="49.62" y="7.84" width="1.99" height="1.96"/><rect x="41.69" y="9.80" width="1.99" height="1.96"/><rect x="45.66" y="9.80" width="1.99" height="1.96"/><rect x="49.62" y="9.80" width="1.99" height="1.96"/><rect x="43.67" y="11.76" width="1.99" height="1.96"/><rect x="47.64" y="11.76" width="1.99" height="1.96"/><rect x="55.58" y="0.00" width="5.96" height="1.96"/><rect x="53.60" y="1.96" width="1.99" height="1.96"/><rect x="61.54" y="1.96" width="1.99" height="1.96"/><rect x="53.60" y="3.92" width="1.99" height="1.96"/><rect x="61.54" y="3.92" width="1.99" height="1.96"/><rect x="53.60" y="5.88" width="1.99" height="1.96"/><rect x="61.54" y="5.88" width="1.99" height="1.96"/><rect x="53.60" y="7.84" width="1.99" height="1.96"/><rect x="61.54" y="7.84" width="1.99" height="1.96"/><rect x="53.60" y="9.80" width="1.99" height="1.96"/><rect x="61.54" y="9.80" width="1.99" height="1.96"/><rect x="55.58" y="11.76" width="5.96" height="1.96"/><rect x="65.51" y="0.00" width="7.94" height="1.96"/><rect x="65.51" y="1.96" width="1.99" height="1.96"/><rect x="73.45" y="1.96" width="1.99" height="1.96"/><rect x="65.51" y="3.92" width="1.99" height="1.96"/><rect x="73.45" y="3.92" width="1.99" height="1.96"/><rect x="65.51" y="5.88" width="7.94" height="1.96"/><rect x="65.51" y="7.84" width="1.99" height="1.96"/><rect x="69.48" y="7.84" width="1.99" height="1.96"/><rect x="65.51" y="9.80" width="1.99" height="1.96"/><rect x="71.46" y="9.80" width="1.99" height="1.96"/><rect x="65.51" y="11.76" width="1.99" height="1.96"/><rect x="73.45" y="11.76" width="1.99" height="1.96"/><rect x="77.42" y="0.00" width="1.99" height="1.96"/><rect x="85.36" y="0.00" width="1.99" height="1.96"/><rect x="77.42" y="1.96" width="1.99" height="1.96"/><rect x="83.37" y="1.96" width="1.99" height="1.96"/><rect x="77.42" y="3.92" width="1.99" height="1.96"/><rect x="81.39" y="3.92" width="1.99" height="1.96"/><rect x="77.42" y="5.88" width="3.97" height="1.96"/><rect x="77.42" y="7.84" width="1.99" height="1.96"/><rect x="81.39" y="7.84" width="1.99" height="1.96"/><rect x="77.42" y="9.80" width="1.99" height="1.96"/><rect x="83.37" y="9.80" width="1.99" height="1.96"/><rect x="77.42" y="11.76" width="1.99" height="1.96"/><rect x="85.36" y="11.76" width="1.99" height="1.96"/><rect x="89.33" y="0.00" width="9.93" height="1.96"/><rect x="89.33" y="1.96" width="1.99" height="1.96"/><rect x="89.33" y="3.92" width="1.99" height="1.96"/><rect x="89.33" y="5.88" width="7.94" height="1.96"/><rect x="89.33" y="7.84" width="1.99" height="1.96"/><rect x="89.33" y="9.80" width="1.99" height="1.96"/><rect x="89.33" y="11.76" width="1.99" height="1.96"/><rect x="101.23" y="0.00" width="1.99" height="1.96"/><rect x="101.23" y="1.96" width="1.99" height="1.96"/><rect x="101.23" y="3.92" width="1.99" height="1.96"/><rect x="101.23" y="5.88" width="1.99" height="1.96"/><rect x="101.23" y="7.84" width="1.99" height="1.96"/><rect x="101.23" y="9.80" width="1.99" height="1.96"/><rect x="101.23" y="11.76" width="9.93" height="1.96"/><rect x="115.13" y="0.00" width="5.96" height="1.96"/><rect x="113.15" y="1.96" width="1.99" height="1.96"/><rect x="121.09" y="1.96" width="1.99" height="1.96"/><rect x="113.15" y="3.92" width="1.99" height="1.96"/><rect x="121.09" y="3.92" width="1.99" height="1.96"/><rect x="113.15" y="5.88" width="1.99" height="1.96"/><rect x="121.09" y="5.88" width="1.99" height="1.96"/><rect x="113.15" y="7.84" width="1.99" height="1.96"/><rect x="121.09" y="7.84" width="1.99" height="1.96"/><rect x="113.15" y="9.80" width="1.99" height="1.96"/><rect x="121.09" y="9.80" width="1.99" height="1.96"/><rect x="115.13" y="11.76" width="5.96" height="1.96"/><rect x="125.06" y="0.00" width="1.99" height="1.96"/><rect x="133.00" y="0.00" width="1.99" height="1.96"/><rect x="125.06" y="1.96" width="1.99" height="1.96"/><rect x="133.00" y="1.96" width="1.99" height="1.96"/><rect x="125.06" y="3.92" width="1.99" height="1.96"/><rect x="133.00" y="3.92" width="1.99" height="1.96"/><rect x="125.06" y="5.88" width="1.99" height="1.96"/><rect x="129.03" y="5.88" width="1.99" height="1.96"/><rect x="133.00" y="5.88" width="1.99" height="1.96"/><rect x="125.06" y="7.84" width="1.99" height="1.96"/><rect x="129.03" y="7.84" width="1.99" height="1.96"/><rect x="133.00" y="7.84" width="1.99" height="1.96"/><rect x="125.06" y="9.80" width="1.99" height="1.96"/><rect x="129.03" y="9.80" width="1.99" height="1.96"/><rect x="133.00" y="9.80" width="1.99" height="1.96"/><rect x="127.04" y="11.76" width="1.99" height="1.96"/><rect x="131.01" y="11.76" width="1.99" height="1.96"/></g></svg>
<svg class="abs" style="left:1133px;top:130px" width="23" height="31" viewBox="0 0 23 31"><path d="M0 0H23V30L11.5 26.5L0 30Z" fill="#a47ef0"/><g fill="#4a2c7e"><rect x="4.7" y="16.8" width="2.6" height="2.6"/><rect x="7.6" y="19.7" width="2.6" height="2.6"/><rect x="10.3" y="16.8" width="2.6" height="2.6"/><rect x="13.2" y="14.0" width="2.6" height="2.6"/><rect x="16.0" y="11.2" width="2.6" height="2.6"/></g></svg>
<div class="abs" style="left:821px;top:179px;width:161px;height:46px;background:#5b3ea0;border-radius:6px"></div>
<div class="abs" style="left:821px;top:179px;width:161px;height:41px;background:#a27fee;border:1px solid #5b3ea0;border-radius:6px;color:#f8eefe;font-size:17.8px;line-height:41px;text-align:center">Download JSON</div>
<div class="abs" style="left:986px;top:179px;width:184px;height:46px;background:#5b3ea0;border-radius:6px"></div>
<div class="abs" style="left:986px;top:179px;width:184px;height:41px;background:#a27fee;border:1px solid #5b3ea0;border-radius:6px;color:#f8eefe;font-size:17.8px;line-height:41px;padding-left:40px">Share Workflow</div>
<svg class="abs" style="left:1004px;top:193px" width="17" height="15" viewBox="0 0 17 15"><path d="M1.2 4.4H9V0.6L15.8 6.8L9 13V11.1H2.2L1.2 9.5Z" fill="#f8eefe"/></svg>

<svg class="abs" style="left:820px;top:283px" width="42" height="42" viewBox="0 0 42 42"><circle cx="21" cy="21" r="19.5" fill="#9b7ae8" stroke="#f4eeb0" stroke-width="2.5"/>
<path d="M8.5 14 C 11 17, 13 20, 16 22.5 M22.5 13 C 19 19, 16 26, 14 33" fill="none" stroke="#fff" stroke-width="3.2" stroke-linecap="round"/>
<circle cx="24.8" cy="26" r="3.6" fill="none" stroke="#fff" stroke-width="2.8"/>
<path d="M34.5 13 C 33.5 19, 33 24, 32 28.5" fill="none" stroke="#efe0a0" stroke-width="2.6" stroke-linecap="round"/>
<path d="M34.5 13 C 33.5 19, 33 24, 32 28.5" fill="none" stroke="#b090f0" stroke-width="1" stroke-linecap="round"/>
<circle cx="31.8" cy="32" r="1.2" fill="#efe0a0"/></svg>
<div class="abs" style="left:872px;top:292px;color:#4a3288;font-size:20px;font-weight:bold;white-space:nowrap;transform:scaleX(0.94);transform-origin:0 0">floyoofficial</div>

<svg class="abs" style="left:820px;top:382px" width="34" height="34" viewBox="0 0 34 34"><circle cx="17" cy="17" r="15.5" fill="#eac73c" stroke="#c7a22c" stroke-width="1"/><path d="M12 12L22 22M22 12L12 22" stroke="#9c7a1c" stroke-width="1.6"/></svg>
<svg class="abs" style="left:0;top:0;overflow:visible" width="1" height="1"><g fill="#1e1530" shape-rendering="crispEdges"><rect x="864.80" y="391.20" width="2.10" height="2.20"/><rect x="876.80" y="391.20" width="2.10" height="2.20"/><rect x="864.80" y="393.40" width="4.50" height="2.20"/><rect x="876.80" y="393.40" width="2.10" height="2.20"/><rect x="864.80" y="395.60" width="2.10" height="2.20"/><rect x="869.60" y="395.60" width="2.10" height="2.20"/><rect x="876.80" y="395.60" width="2.10" height="2.20"/><rect x="864.80" y="397.80" width="2.10" height="2.20"/><rect x="872.00" y="397.80" width="2.10" height="2.20"/><rect x="876.80" y="397.80" width="2.10" height="2.20"/><rect x="864.80" y="400.00" width="2.10" height="2.20"/><rect x="874.40" y="400.00" width="4.50" height="2.20"/><rect x="864.80" y="402.20" width="2.10" height="2.20"/><rect x="876.80" y="402.20" width="2.10" height="2.20"/><rect x="864.80" y="404.40" width="2.10" height="2.20"/><rect x="876.80" y="404.40" width="2.10" height="2.20"/><rect x="883.00" y="395.60" width="4.50" height="2.20"/><rect x="880.60" y="397.80" width="2.10" height="2.20"/><rect x="887.80" y="397.80" width="2.10" height="2.20"/><rect x="880.60" y="400.00" width="2.10" height="2.20"/><rect x="887.80" y="400.00" width="2.10" height="2.20"/><rect x="880.60" y="402.20" width="2.10" height="2.20"/><rect x="887.80" y="402.20" width="2.10" height="2.20"/><rect x="883.00" y="404.40" width="4.50" height="2.20"/><rect x="899.50" y="391.20" width="2.10" height="2.20"/><rect x="899.50" y="393.40" width="2.10" height="2.20"/><rect x="894.70" y="395.60" width="6.90" height="2.20"/><rect x="892.30" y="397.80" width="2.10" height="2.20"/><rect x="899.50" y="397.80" width="2.10" height="2.20"/><rect x="892.30" y="400.00" width="2.10" height="2.20"/><rect x="899.50" y="400.00" width="2.10" height="2.20"/><rect x="892.30" y="402.20" width="2.10" height="2.20"/><rect x="899.50" y="402.20" width="2.10" height="2.20"/><rect x="894.70" y="404.40" width="6.90" height="2.20"/><rect x="906.40" y="395.60" width="4.50" height="2.20"/><rect x="904.00" y="397.80" width="2.10" height="2.20"/><rect x="911.20" y="397.80" width="2.10" height="2.20"/><rect x="904.00" y="400.00" width="9.30" height="2.20"/><rect x="904.00" y="402.20" width="2.10" height="2.20"/><rect x="906.40" y="404.40" width="6.90" height="2.20"/><rect x="918.10" y="395.60" width="6.90" height="2.20"/><rect x="915.70" y="397.80" width="2.10" height="2.20"/><rect x="918.10" y="400.00" width="4.50" height="2.20"/><rect x="922.90" y="402.20" width="2.10" height="2.20"/><rect x="915.70" y="404.40" width="6.90" height="2.20"/><rect x="937.40" y="391.20" width="4.50" height="2.20"/><rect x="935.00" y="393.40" width="2.10" height="2.20"/><rect x="935.00" y="395.60" width="2.10" height="2.20"/><rect x="935.00" y="397.80" width="9.30" height="2.20"/><rect x="935.00" y="400.00" width="2.10" height="2.20"/><rect x="942.20" y="400.00" width="2.10" height="2.20"/><rect x="935.00" y="402.20" width="2.10" height="2.20"/><rect x="942.20" y="402.20" width="2.10" height="2.20"/><rect x="937.40" y="404.40" width="4.50" height="2.20"/><rect x="953.50" y="391.20" width="2.10" height="2.20"/><rect x="965.50" y="391.20" width="2.10" height="2.20"/><rect x="953.50" y="393.40" width="4.50" height="2.20"/><rect x="963.10" y="393.40" width="4.50" height="2.20"/><rect x="953.50" y="395.60" width="2.10" height="2.20"/><rect x="958.30" y="395.60" width="4.50" height="2.20"/><rect x="965.50" y="395.60" width="2.10" height="2.20"/><rect x="953.50" y="397.80" width="2.10" height="2.20"/><rect x="965.50" y="397.80" width="2.10" height="2.20"/><rect x="953.50" y="400.00" width="2.10" height="2.20"/><rect x="965.50" y="400.00" width="2.10" height="2.20"/><rect x="953.50" y="402.20" width="2.10" height="2.20"/><rect x="965.50" y="402.20" width="2.10" height="2.20"/><rect x="953.50" y="404.40" width="2.10" height="2.20"/><rect x="965.50" y="404.40" width="2.10" height="2.20"/><rect x="972.40" y="395.60" width="4.50" height="2.20"/><rect x="970.00" y="397.80" width="2.10" height="2.20"/><rect x="977.20" y="397.80" width="2.10" height="2.20"/><rect x="970.00" y="400.00" width="2.10" height="2.20"/><rect x="977.20" y="400.00" width="2.10" height="2.20"/><rect x="970.00" y="402.20" width="2.10" height="2.20"/><rect x="977.20" y="402.20" width="2.10" height="2.20"/><rect x="972.40" y="404.40" width="4.50" height="2.20"/><rect x="988.90" y="391.20" width="2.10" height="2.20"/><rect x="988.90" y="393.40" width="2.10" height="2.20"/><rect x="984.10" y="395.60" width="6.90" height="2.20"/><rect x="981.70" y="397.80" width="2.10" height="2.20"/><rect x="988.90" y="397.80" width="2.10" height="2.20"/><rect x="981.70" y="400.00" width="2.10" height="2.20"/><rect x="988.90" y="400.00" width="2.10" height="2.20"/><rect x="981.70" y="402.20" width="2.10" height="2.20"/><rect x="988.90" y="402.20" width="2.10" height="2.20"/><rect x="984.10" y="404.40" width="6.90" height="2.20"/><rect x="995.80" y="395.60" width="4.50" height="2.20"/><rect x="993.40" y="397.80" width="2.10" height="2.20"/><rect x="1000.60" y="397.80" width="2.10" height="2.20"/><rect x="993.40" y="400.00" width="9.30" height="2.20"/><rect x="993.40" y="402.20" width="2.10" height="2.20"/><rect x="995.80" y="404.40" width="6.90" height="2.20"/><rect x="1005.00" y="391.20" width="2.10" height="2.20"/><rect x="1005.00" y="393.40" width="2.10" height="2.20"/><rect x="1005.00" y="395.60" width="2.10" height="2.20"/><rect x="1005.00" y="397.80" width="2.10" height="2.20"/><rect x="1005.00" y="400.00" width="2.10" height="2.20"/><rect x="1005.00" y="402.20" width="2.10" height="2.20"/><rect x="1007.40" y="404.40" width="2.10" height="2.20"/><rect x="1012.40" y="395.60" width="6.90" height="2.20"/><rect x="1010.00" y="397.80" width="2.10" height="2.20"/><rect x="1012.40" y="400.00" width="4.50" height="2.20"/><rect x="1017.20" y="402.20" width="2.10" height="2.20"/><rect x="1010.00" y="404.40" width="6.90" height="2.20"/></g></svg>
<div class="abs" style="left:822px;top:426px;width:346px;height:226px;background:#f3effd;border:1px solid #6b5c8c;border-radius:10px"></div>
<svg class="abs" style="left:845px;top:453.5px" width="18" height="18" viewBox="0 0 18 18"><path d="M8 1.5H1.5V16.5H16.5V10M11 1.5H16.5V7M16.5 1.5L8 10" fill="none" stroke="#2a2040" stroke-width="1.8"/></svg>
<div class="abs" style="left:880px;top:450.5px;color:#1f1638;font-size:20px;font-weight:bold;white-space:nowrap;transform:scaleX(0.96);transform-origin:0 0">ComfyUI Official</div>
<svg class="abs" style="left:1126px;top:455px" width="22" height="14" viewBox="0 0 22 14"><path d="M1 2L11 12L21 2" fill="none" stroke="#2a2040" stroke-width="1.6"/></svg>
<div class="abs" style="left:843px;top:497px;width:306px;height:1px;background:#3a3050"></div>
<svg class="abs" style="left:845px;top:525px" width="18" height="18" viewBox="0 0 18 18"><path d="M8 1.5H1.5V16.5H16.5V10M11 1.5H16.5V7M16.5 1.5L8 10" fill="none" stroke="#2a2040" stroke-width="1.8"/></svg>
<div class="abs" style="left:880px;top:522.5px;color:#1f1638;font-size:20px;font-weight:bold;white-space:nowrap;transform:scaleX(0.96);transform-origin:0 0">ComfyUI-KJNodes</div>
<svg class="abs" style="left:1126px;top:526px" width="22" height="14" viewBox="0 0 22 14"><path d="M1 12L11 2L21 12" fill="none" stroke="#2a2040" stroke-width="1.6"/></svg>
<div class="abs" style="left:881px;top:568px;color:#1f1638;font-size:14px;font-weight:bold;line-height:24.5px;white-space:nowrap;transform:scaleX(0.95);transform-origin:0 0">AddLabel<br>ImageConcatMulti<br>ImageConcanate</div>

<div class="abs" style="left:1118px;top:751px;width:74px;height:74px;border-radius:50%;background:radial-gradient(circle,rgba(230,220,250,0.9) 55%,rgba(240,236,250,0) 72%)"></div><svg class="abs" style="left:1125px;top:758px" width="60" height="60" viewBox="0 0 60 60"><circle cx="30" cy="30" r="29" fill="#a57cf0" stroke="#ecdffd" stroke-width="1"/><path d="M17.5 18H42V37H28V43H22.5V37H17.5Z" fill="#f6eefe"/><rect x="22" y="28" width="2" height="2" fill="#5a3d9e"/><rect x="36" y="28" width="2" height="2" fill="#5a3d9e"/><rect x="24" y="30.5" width="12" height="1.8" fill="#5a3d9e"/></svg>
</body></html>
